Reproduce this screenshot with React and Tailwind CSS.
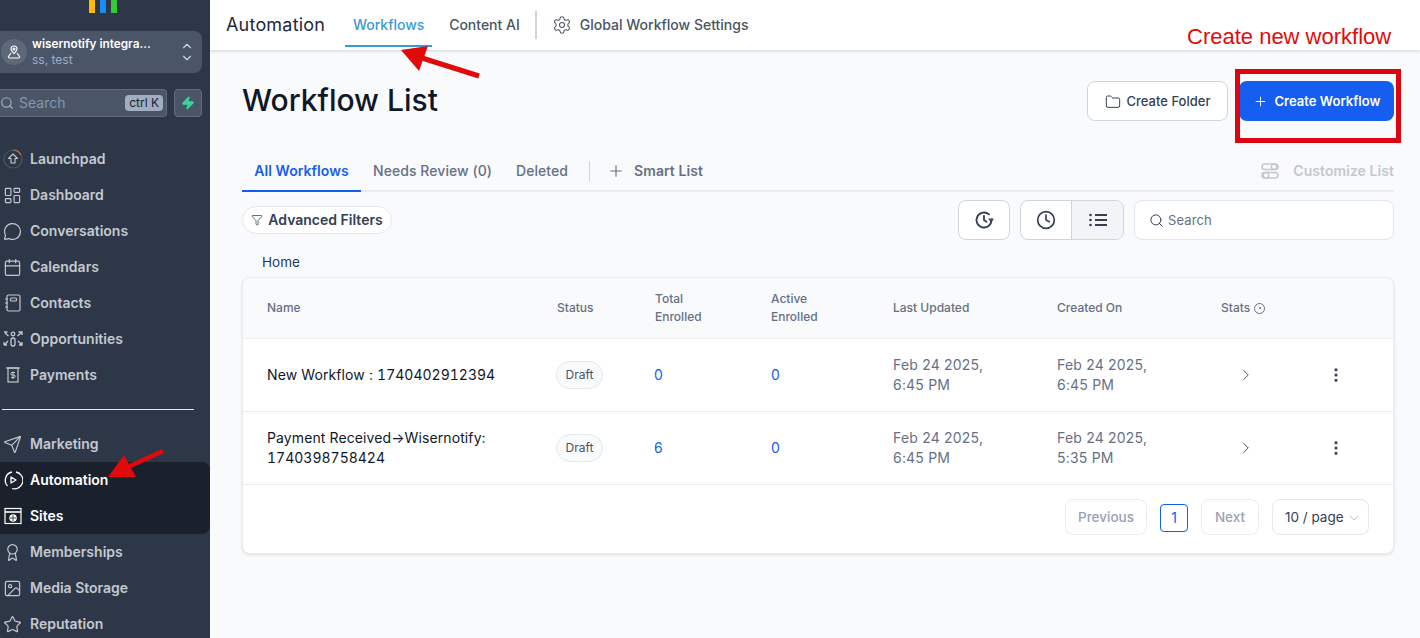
import {
  Award,
  Calendar,
  ChevronDown,
  ChevronRight,
  ChevronUp,
  Clock,
  EllipsisVertical,
  Folder,
  Funnel,
  Image,
  LayoutDashboard,
  MessageCircle,
  Plus,
  Search,
  Send,
  Settings,
  Star,
  Zap,
} from 'lucide-react';

const LaunchpadIcon = () => (
  <svg width="20" height="20" viewBox="0 0 20 20" fill="none">
    <circle cx="10" cy="10" r="9" stroke="#4b5563" strokeWidth="1.2" />
    <path d="M10 1a9 9 0 0 1 8 5" stroke="#c2773a" strokeWidth="1.2" />
    <path d="M10 5l4.5 4.5h-2.5v4.500h-4v-4.500h-2.500z" stroke="#c5c9d0" strokeWidth="1.100" strokeLinejoin="round" />
  </svg>
);

const ContactsIcon = () => (
  <svg width="18" height="18" viewBox="0 0 18 18" fill="none" stroke="#c5c9d0" strokeWidth="1.200">
    <rect x="3" y="1" width="13" height="16" rx="1.500" />
    <rect x="6.500" y="4" width="6" height="3" rx="1" />
    <path d="M1 5h3M1 9h3M1 13h3" />
  </svg>
);

const OpportunitiesIcon = () => (
  <svg width="20" height="18" viewBox="0 0 20 18" fill="none" stroke="#c5c9d0" strokeWidth="1.300">
    <circle cx="10" cy="4" r="1.800" />
    <rect x="8" y="8" width="4" height="8" rx="2" />
    <path d="M1 2h3.500M1 2v0M5.500 6L2 3M15.500 2H19v3M14.500 6L18 3M1 15v-3M1 15h3M5 11L2 14.500M19 12v3h-3M15 11l3.500 3.500" />
  </svg>
);

const PaymentsIcon = () => (
  <svg width="18" height="18" viewBox="0 0 18 18" fill="none" stroke="#c5c9d0" strokeWidth="1.200">
    <path d="M2 2h14" />
    <rect x="4" y="2" width="10" height="14" />
    <path d="M11 6.500H8a1 1 0 0 0 0 2.500h2a1 1 0 0 1 0 2.500H7M9 5.500v7.500" strokeWidth="1" />
  </svg>
);

const AutomationIcon = () => (
  <svg width="20" height="20" viewBox="0 0 20 20" fill="none" stroke="#ffffff" strokeWidth="1.300">
    <path d="M13 2a8.500 8.500 0 1 1-4 16.500" />
    <path d="M4.500 16A8.500 8.500 0 0 1 9 2" />
    <path d="M8 7l5 3-5 3z" strokeLinejoin="round" />
  </svg>
);

const SitesIcon = () => (
  <svg width="18" height="18" viewBox="0 0 18 18" fill="none" stroke="#ffffff" strokeWidth="1.200">
    <rect x="1" y="1.500" width="16" height="15" />
    <path d="M1 5h16" strokeWidth="1.600" />
    <circle cx="9" cy="11" r="3.200" fill="#ffffff" />
    <path d="M5.800 11h6.400M9 7.800v6.400" stroke="#1a202c" strokeWidth="0.800" />
  </svg>
);

const CustomizeIcon = () => (
  <svg width="18" height="18" viewBox="0 0 18 18" fill="none" stroke="#c4c8cf" strokeWidth="1.500">
    <rect x="1" y="2" width="16" height="5.500" rx="2.750" />
    <rect x="1" y="10.500" width="16" height="5.500" rx="2.750" />
    <circle cx="13" cy="4.750" r="2.750" />
    <circle cx="5" cy="13.250" r="2.750" />
  </svg>
);

const HistoryIcon = () => (
  <svg width="20" height="20" viewBox="0 0 24 24" fill="none" stroke="#344054" strokeWidth="2.200" strokeLinecap="round">
    <path d="M21 12a9 9 0 1 1-3-6.700" />
    <path d="M12 7v5l3 2" />
    <path d="M23 11l-2.500 3L18 11z" fill="#344054" strokeWidth="1" />
  </svg>
);

const ListIcon = () => (
  <svg width="18" height="14" viewBox="0 0 18 14" fill="#344054" stroke="#344054">
    <circle cx="1.500" cy="2" r="1.300" stroke="none" />
    <circle cx="1.500" cy="7" r="1.300" stroke="none" />
    <circle cx="1.500" cy="12" r="1.300" stroke="none" />
    <path d="M6 2h12M6 7h12M6 12h12" strokeWidth="1.800" />
  </svg>
);

const topNav = [
  { label: 'Launchpad', icon: <LaunchpadIcon /> },
  { label: 'Dashboard', icon: <LayoutDashboard size={19} strokeWidth={1.5} /> },
  { label: 'Conversations', icon: <MessageCircle size={19} strokeWidth={1.5} /> },
  { label: 'Calendars', icon: <Calendar size={19} strokeWidth={1.5} /> },
  { label: 'Contacts', icon: <ContactsIcon /> },
  { label: 'Opportunities', icon: <OpportunitiesIcon /> },
  { label: 'Payments', icon: <PaymentsIcon /> },
];

const bottomNav = [
  { label: 'Memberships', icon: <Award size={19} strokeWidth={1.5} /> },
  { label: 'Media Storage', icon: <Image size={19} strokeWidth={1.5} /> },
  { label: 'Reputation', icon: <Star size={19} strokeWidth={1.5} /> },
];

const rows = [
  {
    name: 'New Workflow : ',
    id: '1740402912394',
    total: '0',
    active: '0',
    updated: ['Feb 24 2025,', '6:45 PM'],
    created: ['Feb 24 2025,', '6:45 PM'],
  },
  {
    name: 'Payment Received→Wisernotify: ',
    id: '1740398758424',
    total: '6',
    active: '0',
    updated: ['Feb 24 2025,', '6:45 PM'],
    created: ['Feb 24 2025,', '5:35 PM'],
  },
];

const NavItem = ({ label, icon, active }) => (
  <div className={`flex h-9 shrink-0 items-center ${active ? 'text-white' : 'text-[#c5c9d0]'}`}>
    <div className="flex w-[24px] shrink-0 items-center justify-center pl-[1px]">{icon}</div>
    <span className="ml-[6px] text-sm font-semibold">{label}</span>
  </div>
);

const Sidebar = () => (
  <aside className="flex h-full w-[210px] shrink-0 flex-col overflow-hidden bg-[#2d3748] pr-[8px]">
    <div className="flex h-[13px] shrink-0 justify-center gap-[5px] pl-[4px]">
      <div className="h-full w-[6px] bg-[#ffbc00]" />
      <div className="h-full w-[6px] bg-[#188bf6]" />
      <div className="h-full w-[6px] bg-[#37ca37]" />
    </div>

    <div className="mt-[18px] flex h-[42px] shrink-0 items-center rounded-r-lg bg-[#4a5568] pl-[1px] pr-[8px]">
      <div className="flex h-[26px] w-[26px] shrink-0 items-center justify-center rounded-full bg-[#5f6878]">
        <svg width="14" height="14" viewBox="0 0 14 14" fill="none" stroke="#ffffff" strokeWidth="1.100">
          <path d="M7 1a3 3 0 0 1 3 3c0 1.800-2 3.500-3 4.500C6 7.500 4 5.800 4 4a3 3 0 0 1 3-3z" />
          <circle cx="7" cy="4" r="1" />
          <path d="M4 8L1.500 11.500a1 1 0 0 0 1 1.500h9a1 1 0 0 0 1-1.500L10 8" />
        </svg>
      </div>
      <div className="ml-[5px] min-w-0 flex-1">
        <div className="truncate text-[11.8px] leading-[15px] font-semibold text-white">wisernotify integra...</div>
        <div className="text-xs leading-[15px] text-[#a0aec0]">ss, test</div>
      </div>
      <div className="flex flex-col text-[#cbd5e0]">
        <ChevronUp size={14} className="-mb-[1px]" />
        <ChevronDown size={14} className="-mt-[1px]" />
      </div>
    </div>

    <div className="mt-[16px] flex h-[28px] shrink-0 gap-[7px]">
      <div className="flex flex-1 items-center rounded-r border border-l-0 border-[#5f6b7e] bg-[#4a5568] pr-[3px]">
        <Search size={14} className="text-[#a0aec0]" />
        <span className="ml-[5px] flex-1 text-sm text-[#8795a9]">Search</span>
        <span className="rounded-sm bg-[#a0aec0] px-[4px] text-xs leading-[16px] text-[#1a202c]">ctrl K</span>
      </div>
      <div className="flex w-[28px] items-center justify-center rounded border border-[#5f6b7e] bg-[#4a5568]">
        <Zap size={14} className="fill-[#37d399] text-[#37d399]" />
      </div>
    </div>

    <nav className="mt-[24px] shrink-0">
      {topNav.map(item => <NavItem key={item.label} {...item} />)}
    </nav>

    <div className="mt-[16px] ml-[2px] h-px w-[192px] shrink-0 bg-[#e5e7eb]" />

    <div className="mt-[16px] shrink-0">
      <NavItem label="Marketing" icon={<Send size={19} strokeWidth={1.5} />} />
    </div>
    <div className="-mr-[8px] shrink-0 rounded-r-lg bg-[#1a202c]">
      <NavItem label="Automation" icon={<AutomationIcon />} active />
      <NavItem label="Sites" icon={<SitesIcon />} active />
    </div>
    {bottomNav.map(item => <NavItem key={item.label} {...item} />)}
  </aside>
);

const Header = () => (
  <header className="relative flex h-[50px] shrink-0 items-center bg-white pl-[16px] shadow-[0_1px_3px_rgba(16,24,40,0.18)]">
    <span className="text-lg tracking-[0.2px] text-[#1f2937]">Automation</span>
    <div className="relative ml-[20px] flex h-full w-[87px] items-center justify-center pb-[1px] text-sm font-medium text-[#3a9ad9]">
      Workflows
      <div className="absolute right-0 bottom-[3px] left-0 h-[2px] bg-[#3a9ad9]" />
    </div>
    <span className="ml-[17px] text-sm font-medium text-[#4b5563]">Content AI</span>
    <div className="mr-[15px] ml-[15px] h-[28px] w-[2px] bg-[#d1d5db]" />
    <Settings size={20} strokeWidth={1.3} className="text-[#4b5563]" />
    <span className="ml-[8px] text-sm font-medium text-[#4b5563]">Global Workflow Settings</span>
  </header>
);

const TitleRow = () => (
  <div className="flex h-[40px] items-center justify-between">
    <h1 className="-mt-[2px] text-3xl font-medium text-[#101828]">Workflow List</h1>
    <div className="flex gap-[11px]">
      <button className="flex h-[40px] w-[141px] items-center justify-center gap-[6px] rounded-lg border border-[#d0d5dd] bg-white pt-[1px] text-[13px] font-medium text-[#344054]">
        <Folder size={16} strokeWidth={1.5} />
        Create Folder
      </button>
      <button className="flex h-[40px] w-[155px] items-center justify-center gap-[7px] rounded-lg bg-[#155eef] pt-[1px] font-semibold text-white">
        <Plus size={15} strokeWidth={1.5} />
        <span className="text-[13px] tracking-[0.03px]">Create Workflow</span>
      </button>
    </div>
  </div>
);

const Tabs = () => (
  <div className="mt-[29px] flex h-[42px] items-stretch border-b-2 border-[#e9ebef] pt-[2px] text-sm tracking-[0.06px]">
    <div className="-mb-[2px] flex w-[119px] items-center justify-center border-b-2 border-[#155eef] font-semibold text-[#155eef]">
      All Workflows
    </div>
    <div className="ml-[12px] flex items-center font-medium text-[#667085]">Needs Review (0)</div>
    <div className="ml-[24px] flex items-center font-medium text-[#667085]">Deleted</div>
    <div className="flex items-center">
      <div className="ml-[21px] h-[20px] w-px bg-[#d0d5dd]" />
      <Plus size={18} strokeWidth={1.5} className="ml-[17px] text-[#667085]" />
      <span className="ml-[9px] font-semibold text-[#667085]">Smart List</span>
    </div>
    <div className="ml-auto flex items-center gap-[14px] font-semibold text-[#c4c8cf]">
      <CustomizeIcon />
      Customize List
    </div>
  </div>
);

const Filters = () => (
  <div className="mt-[8px] flex h-[40px] items-center">
    <button className="flex h-[28px] w-[150px] items-center justify-center gap-[5px] rounded-full border border-[#e4e7ec] bg-white text-sm font-semibold text-[#344054]">
      <Funnel size={12} strokeWidth={1.5} />
      Advanced Filters
    </button>
    <button className="ml-auto flex h-[40px] w-[52px] items-center justify-center rounded-lg border border-[#d0d5dd] bg-white">
      <HistoryIcon />
    </button>
    <div className="ml-[10px] flex h-[40px] w-[104px] overflow-hidden rounded-lg border border-[#d0d5dd] bg-white text-[#344054]">
      <div className="flex w-[50px] items-center justify-center">
        <Clock size={20} strokeWidth={2} />
      </div>
      <div className="flex flex-1 items-center justify-center border-l border-[#d0d5dd] bg-[#f2f4f7]">
        <ListIcon />
      </div>
    </div>
    <div className="ml-[10px] flex h-[40px] w-[260px] items-center gap-[4px] rounded-lg border border-[#e4e7ec] bg-white pl-[14px]">
      <Search size={15} strokeWidth={1.6} className="text-[#344054]" />
      <span className="pt-[2px] text-[13px] tracking-[0.1px] text-[#667085]">Search</span>
    </div>
  </div>
);

const WorkflowRow = ({ row }) => (
  <div className="grid h-[73px] grid-cols-[314px_98px_116px_122px_164px_164px_1fr] items-center border-b border-[#eaecf0] text-sm leading-[20px] tracking-[0.2px]">
    <div className="pr-[20px] pl-[24px] tracking-[0.1px] text-[#101828]">
      {row.name}
      <span className="tracking-normal tabular-nums">{row.id}</span>
    </div>
    <div>
      <span className="-ml-[1px] inline-flex h-[28px] w-[47px] items-center justify-center rounded-full border border-[#e4e7ec] bg-[#f9fafb] text-xs font-normal tracking-normal text-[#475467]">
        Draft
      </span>
    </div>
    <div className="-ml-[1px] text-[#155eef]">{row.total}</div>
    <div className="text-[#155eef]">{row.active}</div>
    <div className="text-[#667085]">{row.updated[0]}<br />{row.updated[1]}</div>
    <div className="text-[#667085]">{row.created[0]}<br />{row.created[1]}</div>
    <div className="flex items-center text-[#475467]">
      <ChevronRight size={18} strokeWidth={1.3} className="ml-[16px]" />
      <EllipsisVertical size={18} strokeWidth={2.2} className="ml-[72px] text-[#344054]" />
    </div>
  </div>
);

const Table = () => (
  <div className="overflow-hidden rounded-lg border border-[#eaecf0] bg-white shadow-[0_1px_3px_rgba(16,24,40,0.12)]">
    <div className="grid h-[61px] grid-cols-[314px_98px_116px_122px_164px_164px_1fr] items-center border-b border-[#eaecf0] bg-[#f9fafb] text-xs leading-[18px] font-medium text-[#667085]">
      <div className="pl-[24px]">Name</div>
      <div>Status</div>
      <div>Total<br />Enrolled</div>
      <div>Active<br />Enrolled</div>
      <div>Last Updated</div>
      <div>Created On</div>
      <div className="flex items-center gap-[4px]">
        Stats
        <span className="flex h-[11px] w-[11px] items-center justify-center rounded-full border border-[#667085]">
          <span className="h-[2px] w-[2px] rounded-full bg-[#667085]" />
        </span>
      </div>
    </div>
    {rows.map(row => <WorkflowRow key={row.id} row={row} />)}
    <div className="flex h-[68px] items-start justify-end pt-[14px] pr-[24px] text-sm">
      <button className="h-[36px] w-[82px] rounded-lg border border-[#eaecf0] pt-[1px] text-[13.5px] font-medium text-[#98a2b3]">Previous</button>
      <button className="mt-[5px] ml-[13px] h-[28px] w-[28px] rounded-sm border border-[#155eef] text-[#155eef]">1</button>
      <button className="ml-[13px] h-[36px] w-[58px] rounded-lg border border-[#eaecf0] pt-[1px] text-[13.5px] font-medium text-[#98a2b3]">Next</button>
      <button className="ml-[13px] flex h-[36px] w-[97px] items-center gap-[2px] rounded-lg border border-[#e4e7ec] pt-[1px] pl-[12px] text-[13.5px] text-[#344054]">
        10 / page
        <ChevronDown size={16} strokeWidth={1} className="text-[#98a2b3]" />
      </button>
    </div>
  </div>
);

// red marks drawn on top of the screenshot
const Annotations = () => (
  <>
    <span className="absolute top-[24px] left-[1187px] font-['Liberation_Sans',sans-serif] text-[22px] leading-[26px] whitespace-nowrap text-[#e20a0a]">
      Create new workflow
    </span>
    <div className="absolute top-[69px] left-[1235px] h-[74px] w-[166px] border-[5px] border-[#dd0510]" />
    <svg className="absolute top-0 left-0" width="1420" height="638" fill="none">
      <path d="M401 50L428 46 419 71z" fill="#e00a0a" />
      <path d="M422 58L479 76" stroke="#e00a0a" strokeWidth="5" />
      <path d="M108 477L124 455 136 477z" fill="#e00a0a" />
      <path d="M128 467L163 451" stroke="#e00a0a" strokeWidth="4.500" />
    </svg>
  </>
);

const App = () => (
  <div className="relative flex h-[638px] w-[1420px] overflow-hidden bg-white font-[Inter,sans-serif]">
    <Sidebar />
    <main className="flex min-w-0 flex-1 flex-col bg-[#f9fafb]">
      <Header />
      <div className="pt-[31px] pr-[26px] pl-[32px]">
        <TitleRow />
        <Tabs />
        <Filters />
        <div className="mt-[13px] pl-[20px] text-[13.5px] leading-[18px] text-[#1d3a5f]">Home</div>
        <div className="mt-[6px]">
          <Table />
        </div>
      </div>
    </main>
    <Annotations />
  </div>
);

export default App;
